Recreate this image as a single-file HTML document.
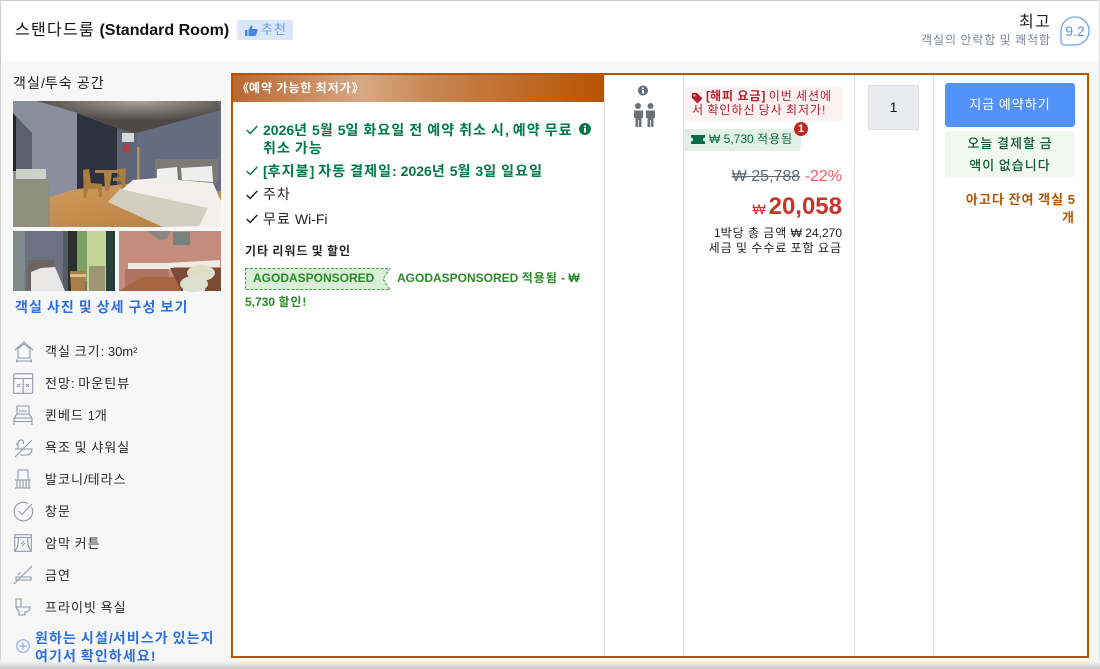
<!DOCTYPE html>
<html lang="ko"><head><meta charset="utf-8"><title>스탠다드룸</title>
<style>
html,body{margin:0;padding:0;width:1100px;height:669px;overflow:hidden;background:#fff}
body{position:relative;font-family:"Liberation Sans","WenQuanYi Zen Hei","Noto Sans CJK KR",sans-serif;color:#2a2a2e}
.a{position:absolute;white-space:nowrap}
i{font-style:normal;letter-spacing:.08em;word-spacing:-.08em}
.sep{position:absolute;top:75px;width:1px;height:581px;background:#dddfe2}
.g{color:#00794a;font-weight:700;font-size:14px}
.am{font-size:13px;color:#2a2a2e;left:45px}
svg{position:absolute;overflow:visible}
.ic{fill:none;stroke:#9299a6;stroke-width:1.1}
</style></head><body>
<div class="a" style="left:0;top:0;width:1100px;height:1px;background:#ccc"></div>
<div class="a" style="left:0;top:0;width:1px;height:669px;background:#ccc"></div>
<div class="a" style="right:0;top:0;width:1px;height:669px;background:#ddd"></div>
<div class="a" style="left:1px;top:61px;width:1098px;height:608px;background:#f7f7f7"></div>
<div class="a" style="left:0;top:657px;width:1100px;height:12px;background:linear-gradient(#f7f7f700 0,#f3f3f3 40%,#c8c8c8 100%)"></div>

<div class="a" style="left:15px;top:21px;font-size:16px;font-weight:700;color:#111;line-height:20px"><i style="font-weight:400">스탠다드룸</i> (Standard Room)</div>
<div class="a" style="left:237px;top:20px;width:56px;height:20px;background:#d9e8ff;border-radius:2px"></div>
<svg style="left:245px;top:25px" width="13" height="11" viewBox="0 0 13 11"><path fill="#4286e8" d="M0 5h2.500v6H0zM3.500 5 6 .5c1.200-.4 1.700.6 1.400 1.600L7 4h4.500c1 0 1.400 1 1 1.800L11 10c-.2.600-.7 1-1.300 1H3.500z"/></svg>
<div class="a" style="left:261px;top:21px;font-size:13px;color:#6f9fe8;line-height:18px"><i>추천</i></div>

<div class="a" style="right:49px;top:13px;font-size:16px;color:#222;line-height:20px"><i style="letter-spacing:.08em">최고</i></div>
<div class="a" style="right:49px;top:32px;font-size:12px;color:#7c8494;line-height:17px"><i>객실의 안락함 및 쾌적함</i></div>
<svg style="left:1060px;top:16px" width="30" height="30" viewBox="0 0 30 30"><path d="M1 25V15A14 14 0 1 1 15 29H5Q1 29 1 25Z" fill="#fff" stroke="#6f9ff5" stroke-width="1.300"/><text x="15" y="20" text-anchor="middle" font-size="14" fill="#5d8ff0" font-family="Liberation Sans">9.2</text></svg>

<div class="a" style="left:13px;top:74px;font-size:14px;color:#1c1c22;line-height:19px"><i>객실</i>/<i>투숙 공간</i></div>

<!-- main photo -->
<svg style="left:13px;top:101px" width="208" height="126" viewBox="0 0 208 126">
<defs><linearGradient id="fl" x1="0" x2="1" y1="0" y2="1"><stop offset="0" stop-color="#d09c5c"/><stop offset="1" stop-color="#b57c40"/></linearGradient>
<radialGradient id="ce" cx=".55" cy="0" r=".6"><stop offset="0" stop-color="#a8a29e"/><stop offset="1" stop-color="#4f4945"/></radialGradient></defs>
<rect width="208" height="126" fill="#6a7082"/>
<path d="M0 0H24L65 12V90L37 96 0 90Z" fill="#8a8f9e"/>
<path d="M24 0H205L208 9 120 33 65 12Z" fill="url(#ce)"/>
<path d="M124 32 205 10V95H124Z" fill="#666c7f"/>
<path d="M64 12 104 27V88H64Z" fill="#2f323d"/>
<path d="M104 27 124 33V85H104Z" fill="#5e6476"/>
<path d="M37 96 64 88 124 82 208 90V126H37Z" fill="url(#fl)"/>
<rect x="0" y="78" width="37" height="48" fill="#8c907c"/>
<path d="M0 12 19 32V68L0 70Z" fill="#5d606b"/><path d="M0 12 3 16V70H0Z" fill="#22242a"/>
<rect x="3" y="68" width="30" height="10" fill="#cfd1cc"/>
<rect x="109" y="32" width="12" height="9" fill="#d8d8d8"/><rect x="110" y="44" width="6" height="7" fill="#b7393a"/>
<rect x="124" y="46" width="2.500" height="35" fill="#b4905e"/>
<path d="M82 69H107V72H99L96 90H92L91 72H82Z" fill="#ad8147"/>
<path d="M70 69 76 68 78 82 89 83 89 96 86 96 85 88 75 88 73 97 71 97Z" fill="#a97d3e"/>
<path d="M104 68 113 67 112 87 109 87 108 80 100 80 100 77 107 76Z" fill="#a97d3e"/>
<rect x="142" y="58" width="63" height="24" fill="#7d7a74"/>
<path d="M144 68 164 66 165 79 144 78ZM168 67 199 65 200 81 169 79Z" fill="#efefef"/>
<path d="M95 101 120 79 144 77 200 82 208 100V126H150Z" fill="#f2f0ec"/>
<path d="M95 101 107 88 195 107 186 125 150 126Z" fill="#d3cfc0"/>
</svg>

<!-- sub photo 1 -->
<svg style="left:13px;top:231px" width="102" height="60" viewBox="0 0 102 60">
<rect width="102" height="60" fill="#6d7282"/>
<rect width="12" height="60" fill="#7e8a8c"/>
<rect x="50" y="0" width="5" height="60" fill="#555a66"/>
<rect x="55" y="0" width="9" height="60" fill="#2b3028"/>
<rect x="64" y="0" width="10" height="50" fill="#7ea064"/>
<rect x="74" y="0" width="19" height="60" fill="#c3d494"/>
<rect x="76" y="35" width="16" height="25" fill="#9c9672"/>
<rect x="93" y="0" width="9" height="60" fill="#28403c"/>
<rect x="15" y="29" width="27" height="31" fill="#6e665e"/>
<path d="M18 41 28 37 42 36 52 60H18Z" fill="#e9e6e6"/>
<path d="M57 40H72V60H58Z" fill="#a77e45"/>
<rect x="57" y="43" width="16" height="3" fill="#d6bf8e"/>
</svg>
<!-- sub photo 2 -->
<svg style="left:119px;top:231px" width="102" height="60" viewBox="0 0 102 60">
<rect width="102" height="60" fill="#c48c7c"/>
<path d="M28 0H51L48 8 40 9Z" fill="#8d8782"/>
<rect x="54" y="1" width="17" height="13" fill="#77827c"/>
<path d="M9 32H48L101 29V36H56L50 39H9Z" fill="#eeeae4"/>
<path d="M6 38H50V52L10 58H6Z" fill="#ad7560"/>
<path d="M0 60 24 46 55 46 62 60Z" fill="#a86540"/>
<path d="M51 37H102V60H62Z" fill="#7a4c38"/>
<ellipse cx="82" cy="42" rx="14" ry="8" fill="#ddddc8"/>
<ellipse cx="75" cy="53" rx="14" ry="8" fill="#dde0ce"/>
<rect x="64" y="54" width="22" height="6" fill="#dde0ce"/>
</svg>

<div class="a" style="left:15px;top:298px;font-size:14px;font-weight:700;color:#2c6fe0;line-height:19px"><i>객실 사진 및 상세 구성 보기</i></div>

<!-- amenity icons -->
<svg class="ic" style="left:14px;top:341px" width="20" height="22" viewBox="0 0 20 22"><path d="M1 9 10 1 19 9M3.500 8 10 3 16.500 8M4 8V17H16V8M2 20H18M3 18V21.500M17 18V21.500"/></svg>
<svg class="ic" style="left:13px;top:373px" width="20" height="21" viewBox="0 0 20 21"><rect x=".7" y=".7" width="19" height="19.600" rx="1"/><path d="M.7 5.500H19.700M10.200 5.500V20.300"/><path d="M4 11l3 3M7 11l-3 3M13 11l3 3M16 11l-3 3" stroke-width="1"/></svg>
<svg class="ic" style="left:13px;top:405px" width="20" height="20" viewBox="0 0 20 20"><path d="M4 9V1H16V9M1 13 4 9H16L19 13V20M1 20V13H19M1 16.500H19M6 6H14"/></svg>
<svg class="ic" style="left:14px;top:437px" width="19" height="20" viewBox="0 0 19 20"><path d="M1 20 18 3M4 12V6C4 3 9 1.500 9.500 5V7M1 12H18C18 15 16 18 13 18H6M2 6.500 3.500 8"/></svg>
<svg class="ic" style="left:14px;top:469px" width="18" height="20" viewBox="0 0 18 20"><path d="M4 11V1H14V11M1 11H17M1 19H17M3 11V19M6 11V19M9 11V19M12 11V19M15 11V19"/></svg>
<svg class="ic" style="left:13px;top:501px" width="20" height="20" viewBox="0 0 20 20"><path d="M18.500 6A9.300 9.300 0 1 1 15 2.500"/><path d="M5.500 10 9 13.500 19 3"/></svg>
<svg class="ic" style="left:14px;top:534px" width="18" height="18" viewBox="0 0 18 18"><rect x=".7" y=".7" width="16.600" height="16.600"/><path d="M.7 3.500H17.300M4 3.500C5 9 4 13 1 17M14 3.500C13 9 14 13 17 17M7 10l3-3M8 12l3-3"/></svg>
<svg class="ic" style="left:14px;top:566px" width="18" height="18" viewBox="0 0 18 18"><path d="M0 18 18 0M2 11H17V14H2ZM4 9C4 7 6 8 6 6"/></svg>
<svg class="ic" style="left:15px;top:598px" width="16" height="18" viewBox="0 0 16 18"><path d="M1 1H6V9H1ZM6 9H15C15 12 13 14 10 14V17H4V13C2.500 12 1.500 11 1 9"/></svg>

<div class="a am" style="top:343px;line-height:18px"><i>객실 크기</i>: 30m²</div>
<div class="a am" style="top:375px;line-height:18px"><i>전망</i>: <i>마운틴뷰</i></div>
<div class="a am" style="top:407px;line-height:18px"><i>퀸베드</i> 1<i>개</i></div>
<div class="a am" style="top:439px;line-height:18px"><i>욕조 및 샤워실</i></div>
<div class="a am" style="top:471px;line-height:18px"><i>발코니</i>/<i>테라스</i></div>
<div class="a am" style="top:503px;line-height:18px"><i>창문</i></div>
<div class="a am" style="top:535px;line-height:18px"><i>암막 커튼</i></div>
<div class="a am" style="top:567px;line-height:18px"><i>금연</i></div>
<div class="a am" style="top:599px;line-height:18px"><i>프라이빗 욕실</i></div>

<svg style="left:16px;top:639px" width="14" height="14" viewBox="0 0 14 14"><circle cx="7" cy="7" r="6.300" fill="none" stroke="#8fb1ec" stroke-width="1.200"/><path d="M7 3.500V10.500M3.500 7H10.500" stroke="#8fb1ec" stroke-width="1.200"/></svg>
<div class="a" style="left:35px;top:629px;font-size:14px;font-weight:700;color:#2c6fe0;line-height:18px"><i>원하는 시설</i>/<i>서비스가 있는지</i><br><i>여기서 확인하세요</i>!</div>

<!-- main box -->
<div class="a" style="left:231px;top:73px;width:854px;height:581px;border:2px solid #b85300;background:#fff"></div>
<div class="a" style="left:233px;top:75px;width:371px;height:27px;background:linear-gradient(90deg,#bb6630 0,#d8a984 35%,#c68450 55%,#b85300 100%)"></div>
<div class="a" style="left:237px;top:80px;font-size:12px;font-weight:700;color:#fff;line-height:17px">《<i>예약 가능한 최저가</i>》</div>
<div class="sep" style="left:604px"></div><div class="sep" style="left:683px"></div><div class="sep" style="left:854px"></div><div class="sep" style="left:933px"></div>

<svg style="left:246px;top:125px" width="12" height="10" viewBox="0 0 12 10"><path d="M.7 5 4.200 8.500 11.300 1" fill="none" stroke="#00794a" stroke-width="1.400"/></svg>
<div class="a g" style="left:263px;top:121px;line-height:19px">2026<i>년</i> 5<i>월</i> 5<i>일 화요일 전 예약 취소 시</i>, <i>예약 무료</i></div>
<svg style="left:579px;top:123px" width="12" height="12" viewBox="0 0 12 12"><circle cx="6" cy="6" r="6" fill="#00794a"/><rect x="5" y="5" width="2" height="4.500" fill="#fff"/><rect x="5" y="2.500" width="2" height="1.700" fill="#fff"/></svg>
<div class="a g" style="left:263px;top:139px;line-height:19px"><i>취소 가능</i></div>
<svg style="left:246px;top:166px" width="12" height="10" viewBox="0 0 12 10"><path d="M.7 5 4.200 8.500 11.300 1" fill="none" stroke="#00794a" stroke-width="1.400"/></svg>
<div class="a g" style="left:263px;top:162px;line-height:19px">[<i>후지불</i>] <i>자동 결제일</i>: 2026<i>년</i> 5<i>월</i> 3<i>일 일요일</i></div>
<svg style="left:246px;top:190px" width="12" height="10" viewBox="0 0 12 10"><path d="M.7 5 4.200 8.500 11.300 1" fill="none" stroke="#222" stroke-width="1.400"/></svg>
<div class="a" style="left:263px;top:185px;font-size:14px;color:#222;line-height:19px"><i>주차</i></div>
<svg style="left:246px;top:214px" width="12" height="10" viewBox="0 0 12 10"><path d="M.7 5 4.200 8.500 11.300 1" fill="none" stroke="#222" stroke-width="1.400"/></svg>
<div class="a" style="left:263px;top:210px;font-size:14px;color:#222;line-height:19px"><i>무료</i> Wi-Fi</div>
<div class="a" style="left:245px;top:243px;font-size:12px;font-weight:700;color:#222;line-height:17px"><i>기타 리워드 및 할인</i></div>

<svg style="left:245px;top:268px" width="146" height="22" viewBox="0 0 146 22"><path d="M.5.500H145L138 11 145 21.500H.5Z" fill="#d9eed6" stroke="#47a04a" stroke-dasharray="3 1.500"/></svg>
<div class="a" style="left:253px;top:270px;font-size:12px;font-weight:700;color:#2a8a2a;line-height:17px">AGODASPONSORED</div>
<div class="a" style="left:397px;top:270px;font-size:12px;font-weight:700;color:#2a8a2a;line-height:17px">AGODASPONSORED <i>적용됨</i> - ₩</div>
<div class="a" style="left:245px;top:294px;font-size:12px;font-weight:700;color:#2a8a2a;line-height:17px">5,730 <i>할인</i>!</div>

<!-- occupancy -->
<svg style="left:632px;top:85px" width="24" height="43" viewBox="0 0 24 43"><circle cx="11" cy="5.500" r="5" fill="#5f6b80"/><rect x="10" y="5" width="2" height="3.500" fill="#fff"/><rect x="10" y="2.500" width="2" height="1.500" fill="#fff"/>
<g fill="#6d727a"><circle cx="6" cy="21" r="3"/><path d="M2 25.500H11V33H9.500V42H6.900V35H6.100V42H3.500V33H2Z"/><circle cx="18.500" cy="21" r="3"/><path d="M14 25.500H23V33H21.500V42H18.900V35H18.100V42H15.500V33H14Z"/></g></svg>

<!-- price column -->
<div class="a" style="left:684px;top:87px;width:159px;height:34px;background:#fdf1f1;border-radius:0 3px 3px 0"></div>
<svg style="left:691px;top:92px" width="12" height="12" viewBox="0 0 12 12"><path d="M1 1H6L11.500 6.500 6.500 11.500 1 6Z" fill="#b5202e"/><circle cx="3.500" cy="3.500" r="1" fill="#fdf1f1"/></svg>
<div class="a" style="left:706px;top:88px;font-size:12px;color:#b5202e;line-height:16px"><b>[<i>해피 요금</i>]</b> <i>이번 세션에</i></div>
<div class="a" style="left:692px;top:102px;font-size:12px;color:#b5202e;line-height:16px"><i>서 확인하신 당사 최저가</i>!</div>
<div class="a" style="left:684px;top:129px;width:117px;height:22px;background:#e2f1e6;border-radius:0 3px 3px 0"></div>
<svg style="left:691px;top:134px" width="14" height="11" viewBox="0 0 14 11"><path d="M0 1H14V3.500A2 2 0 0 0 14 7.500V10H0V7.500A2 2 0 0 0 0 3.500Z" fill="#0a6b4a"/></svg>
<div class="a" style="left:709px;top:131px;font-size:12px;color:#0b6a4a;line-height:17px">₩ 5,730 <i>적용됨</i></div>
<div class="a" style="left:794px;top:122px;width:14px;height:14px;border-radius:50%;background:#c0281e;color:#fff;font-size:11px;font-weight:700;line-height:14px;text-align:center">1</div>
<div class="a" style="right:258px;top:167px;font-size:16px;line-height:20px;color:#f0596a"><span style="color:#666b75;text-decoration:line-through">₩ 25,788</span> -22%</div>
<div class="a" style="right:258px;top:192px;font-size:24px;font-weight:700;color:#c9352b;line-height:29px"><span style="font-size:14px;font-weight:400;margin-right:3px">₩</span>20,058</div>
<div class="a" style="right:258px;top:225px;font-size:12px;color:#222;line-height:16px"><span>1</span><i>박당 총 금액</i> ₩ 24,270</div>
<div class="a" style="right:258px;top:240px;font-size:12px;color:#222;line-height:16px"><i>세금 및 수수료 포함 요금</i></div>

<!-- qty -->
<div class="a" style="left:868px;top:85px;width:49px;height:43px;border:1px solid #dcdee2;background:#e9ebef;font-size:14px;line-height:43px;text-align:center;color:#111">1</div>

<!-- CTA -->
<div class="a" style="left:945px;top:83px;width:130px;height:44px;background:#5392f9;border-radius:3px;color:#fff;font-size:13px;line-height:43px;text-align:center"><i>지금 예약하기</i></div>
<div class="a" style="left:945px;top:131px;width:130px;height:46px;background:#f2f7f2;border-radius:3px"></div>
<div class="a" style="left:945px;top:133px;width:130px;font-size:13px;font-weight:500;color:#0f5a32;line-height:22px;text-align:center;height:44px"><i>오늘 결제할 금</i><br><i>액이 없습니다</i></div>
<div class="a" style="right:25px;top:191px;font-size:13px;font-weight:700;color:#b85300;line-height:18px;text-align:right"><i>아고다 잔여 객실</i> 5<br><i>개</i></div>
</body></html>
